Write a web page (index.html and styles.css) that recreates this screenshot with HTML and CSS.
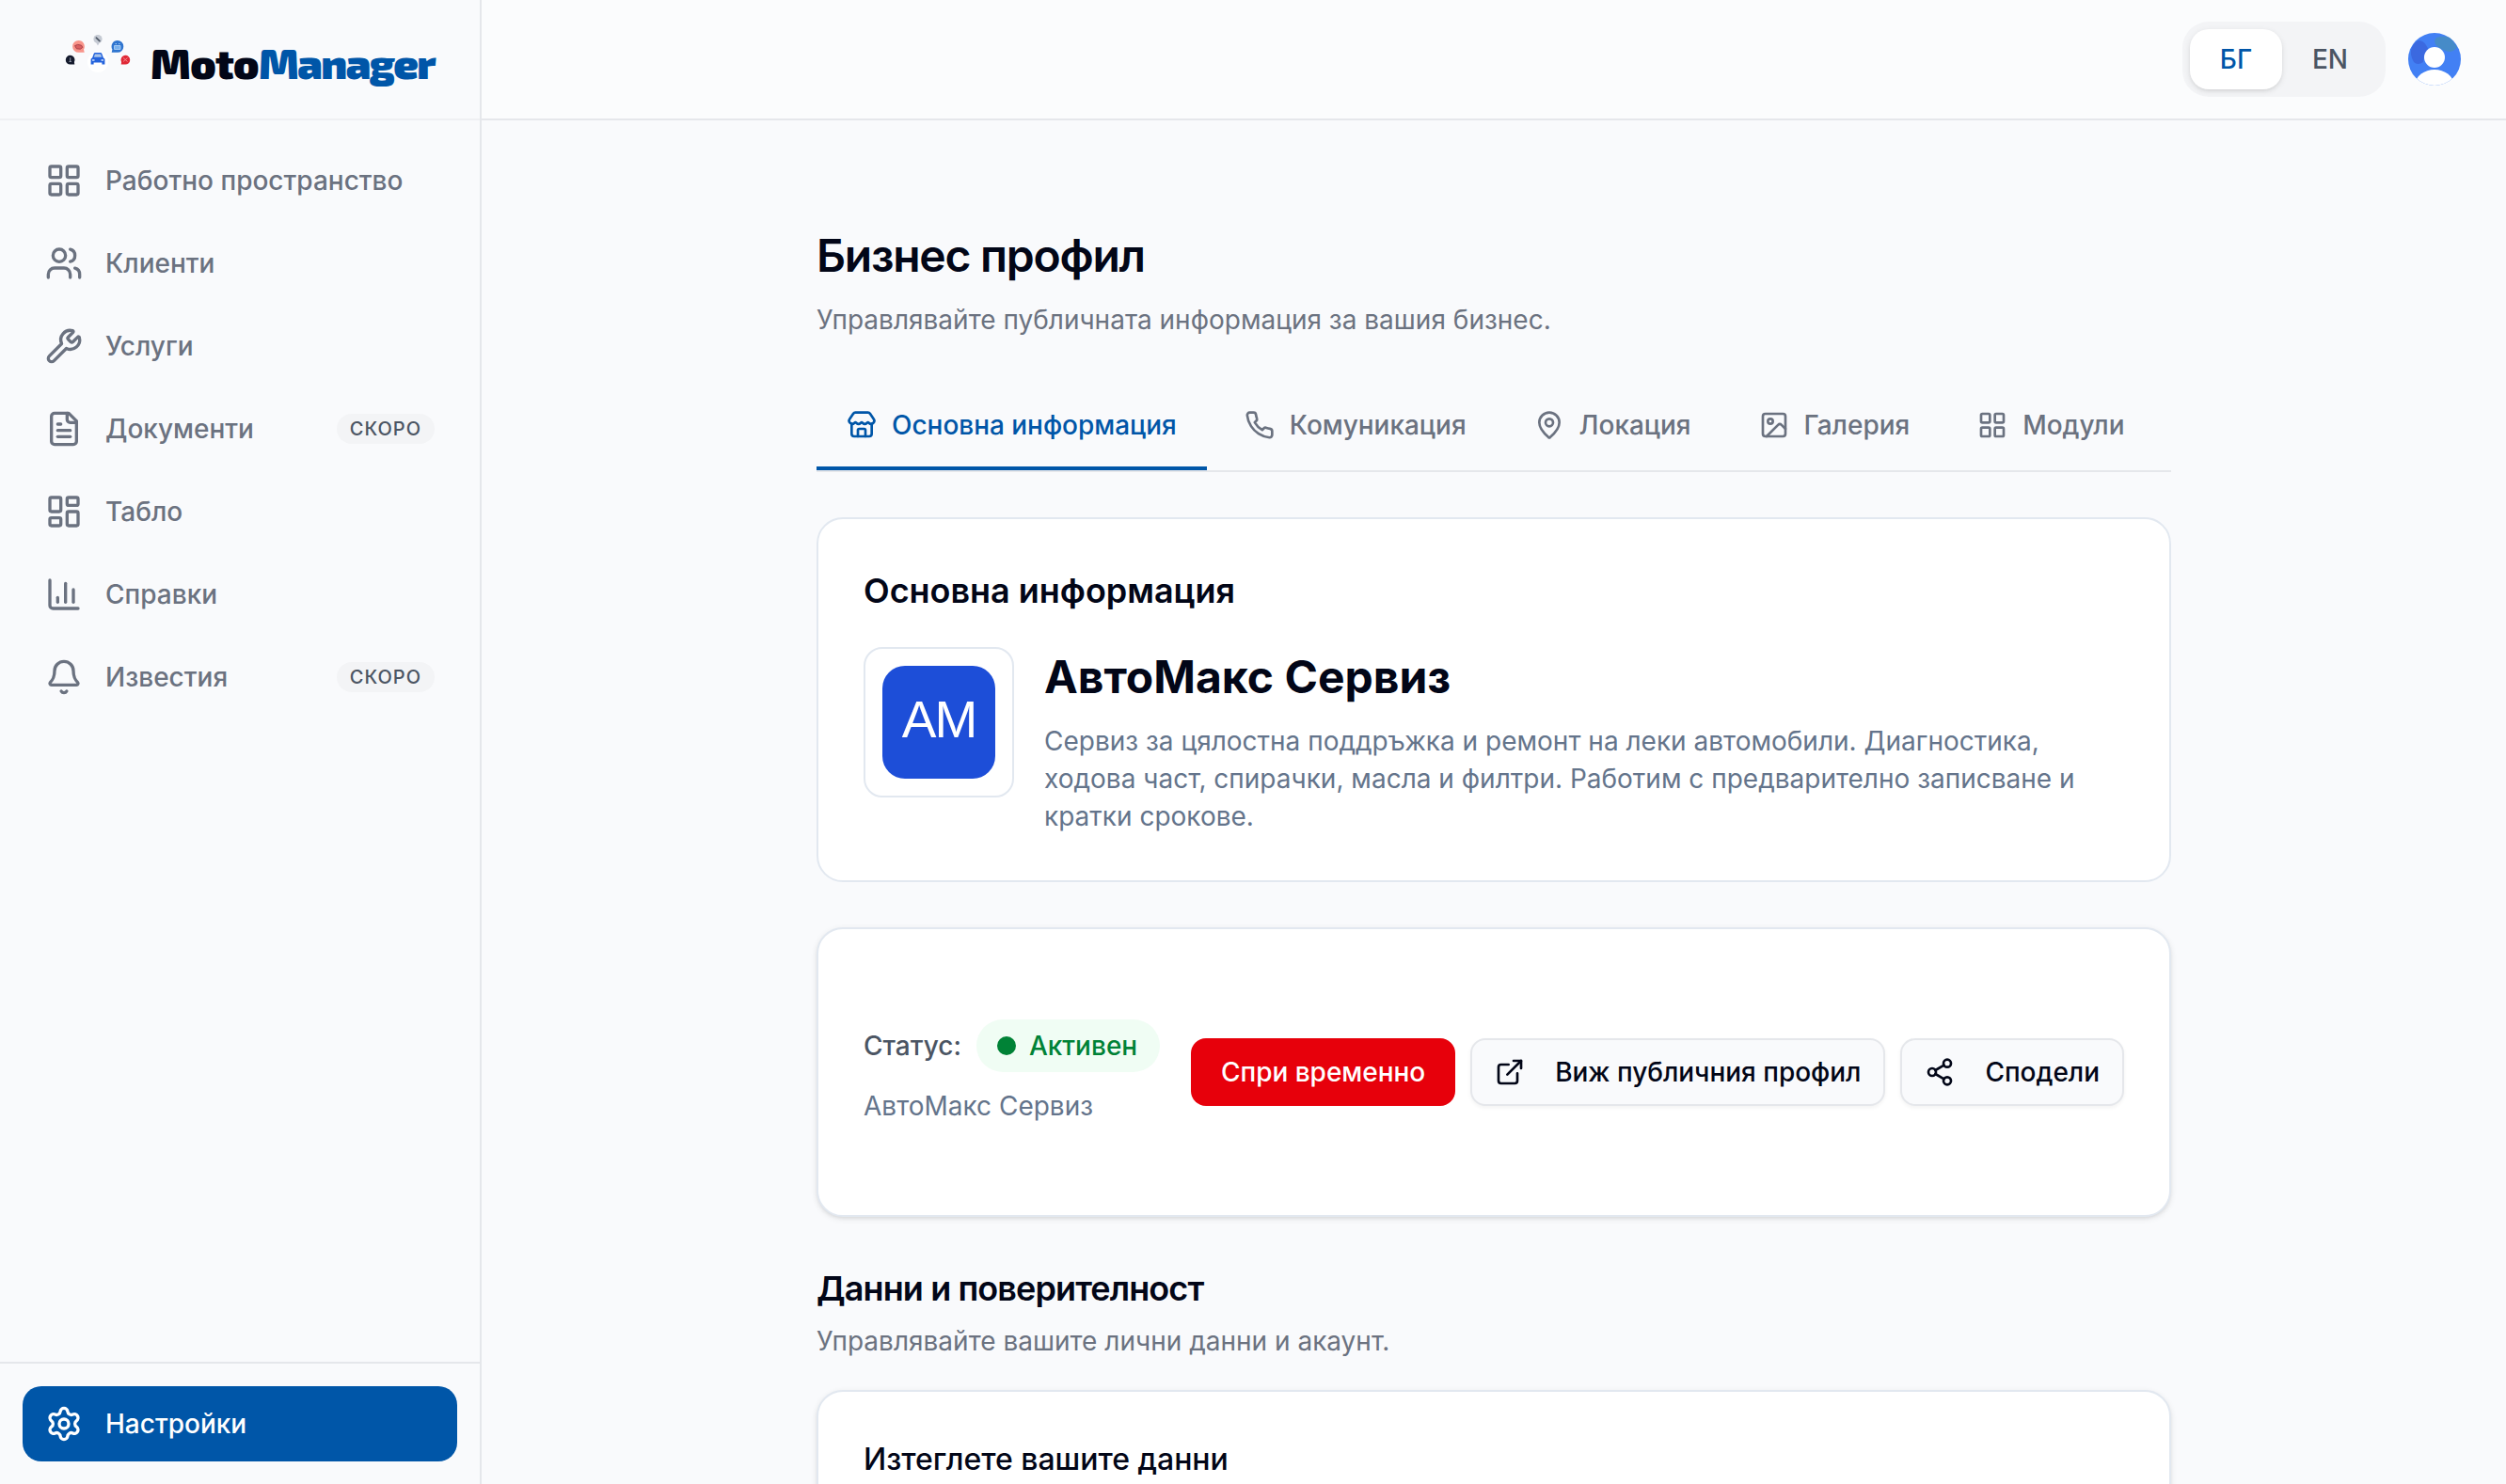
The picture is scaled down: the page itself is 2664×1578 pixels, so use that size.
FILE: index.html
```html
<!DOCTYPE html>
<html lang="bg">
<head>
<meta charset="utf-8">
<title>MotoManager</title>
<link rel="stylesheet" href="styles.css">
</head>
<body>
<svg class="sprite" aria-hidden="true">
  <symbol id="grid" viewBox="0 0 24 24"><rect width="7" height="7" x="3" y="3" rx="1"/><rect width="7" height="7" x="14" y="3" rx="1"/><rect width="7" height="7" x="14" y="14" rx="1"/><rect width="7" height="7" x="3" y="14" rx="1"/></symbol>
  <symbol id="users" viewBox="0 0 24 24"><path d="M16 21v-2a4 4 0 0 0-4-4H6a4 4 0 0 0-4 4v2"/><path d="M16 3.128a4 4 0 0 1 0 7.744"/><path d="M22 21v-2a4 4 0 0 0-3-3.87"/><circle cx="9" cy="7" r="4"/></symbol>
  <symbol id="wrench" viewBox="0 0 24 24"><path d="M14.7 6.3a1 1 0 0 0 0 1.4l1.6 1.6a1 1 0 0 0 1.4 0l3.106-3.105c.32-.322.863-.22.983.218a6 6 0 0 1-8.259 7.057l-7.91 7.91a1 1 0 0 1-2.999-3l7.91-7.91a6 6 0 0 1 7.057-8.259c.438.12.54.662.219.984z"/></symbol>
  <symbol id="file" viewBox="0 0 24 24"><path d="M15 2H6a2 2 0 0 0-2 2v16a2 2 0 0 0 2 2h12a2 2 0 0 0 2-2V7Z"/><path d="M14 2v4a2 2 0 0 0 2 2h4"/><path d="M10 9H8"/><path d="M16 13H8"/><path d="M16 17H8"/></symbol>
  <symbol id="dashboard" viewBox="0 0 24 24"><rect width="7" height="9" x="3" y="3" rx="1"/><rect width="7" height="5" x="14" y="3" rx="1"/><rect width="7" height="9" x="14" y="12" rx="1"/><rect width="7" height="5" x="3" y="16" rx="1"/></symbol>
  <symbol id="chart" viewBox="0 0 24 24"><path d="M3 3v16a2 2 0 0 0 2 2h16"/><path d="M18 17V9"/><path d="M13 17V5"/><path d="M8 17v-3"/></symbol>
  <symbol id="bell" viewBox="0 0 24 24"><path d="M10.268 21a2 2 0 0 0 3.464 0"/><path d="M3.262 15.326A1 1 0 0 0 4 17h16a1 1 0 0 0 .74-1.673C19.41 13.956 18 12.499 18 8A6 6 0 0 0 6 8c0 4.499-1.411 5.956-2.738 7.326"/></symbol>
  <symbol id="settings" viewBox="0 0 24 24"><path d="M9.671 4.136a2.34 2.34 0 0 1 4.659 0 2.34 2.34 0 0 0 3.319 1.915 2.34 2.34 0 0 1 2.33 4.033 2.34 2.34 0 0 0 0 3.831 2.34 2.34 0 0 1-2.33 4.033 2.34 2.34 0 0 0-3.319 1.915 2.34 2.34 0 0 1-4.659 0 2.34 2.34 0 0 0-3.32-1.915 2.34 2.34 0 0 1-2.33-4.033 2.34 2.34 0 0 0 0-3.831A2.34 2.34 0 0 1 6.35 6.051a2.34 2.34 0 0 0 3.319-1.915"/><circle cx="12" cy="12" r="3"/></symbol>
  <symbol id="store" viewBox="0 0 24 24"><path d="M15 21v-5a1 1 0 0 0-1-1h-4a1 1 0 0 0-1 1v5"/><path d="M17.774 10.31a1.12 1.12 0 0 0-1.549 0 2.5 2.5 0 0 1-3.451 0 1.12 1.12 0 0 0-1.548 0 2.5 2.5 0 0 1-3.452 0 1.12 1.12 0 0 0-1.549 0 2.5 2.5 0 0 1-3.77-3.248l2.889-4.184A2 2 0 0 1 7 2h10a2 2 0 0 1 1.653.873l2.895 4.192a2.5 2.5 0 0 1-3.774 3.244"/><path d="M4 10.95V19a2 2 0 0 0 2 2h12a2 2 0 0 0 2-2v-8.05"/></symbol>
  <symbol id="phone" viewBox="0 0 24 24"><path d="M22 16.92v3a2 2 0 0 1-2.18 2 19.79 19.79 0 0 1-8.63-3.07 19.5 19.5 0 0 1-6-6 19.79 19.79 0 0 1-3.07-8.67A2 2 0 0 1 4.11 2h3a2 2 0 0 1 2 1.72 12.84 12.84 0 0 0 .7 2.81 2 2 0 0 1-.45 2.11L8.09 9.91a16 16 0 0 0 6 6l1.27-1.27a2 2 0 0 1 2.11-.45 12.84 12.84 0 0 0 2.81.7A2 2 0 0 1 22 16.92z"/></symbol>
  <symbol id="pin" viewBox="0 0 24 24"><path d="M20 10c0 4.993-5.539 10.193-7.399 11.799a1 1 0 0 1-1.202 0C9.539 20.193 4 14.993 4 10a8 8 0 0 1 16 0"/><circle cx="12" cy="10" r="3"/></symbol>
  <symbol id="image" viewBox="0 0 24 24"><rect width="18" height="18" x="3" y="3" rx="2"/><circle cx="9" cy="9" r="2"/><path d="m21 15-3.086-3.086a2 2 0 0 0-2.828 0L6 21"/></symbol>
  <symbol id="external" viewBox="0 0 24 24"><path d="M15 3h6v6"/><path d="M10 14 21 3"/><path d="M18 13v6a2 2 0 0 1-2 2H5a2 2 0 0 1-2-2V8a2 2 0 0 1 2-2h6"/></symbol>
  <symbol id="share" viewBox="0 0 24 24"><circle cx="18" cy="5" r="3"/><circle cx="6" cy="12" r="3"/><circle cx="18" cy="19" r="3"/><path d="m8.59 13.51 6.83 3.98"/><path d="m15.41 6.51-6.82 3.98"/></symbol>
</svg>

<div class="app">
  <aside class="sidebar">
    <a class="brand" href="#">
      <svg class="brand-mark" viewBox="64 24 80 80">
        <circle cx="104" cy="67" r="11" fill="#fff"/>
        <circle cx="104" cy="42.6" r="4.6" fill="#c5cad3"/>
        <path d="M102.3 46.5h3.4L104 49.5z" fill="#c5cad3"/>
        <path d="M102.3 41.2l3.6 3.4" stroke="#4b5563" stroke-width="1.6" stroke-linecap="round"/>
        <path d="M83.5 44a6.4 6.4 0 1 0 0 12.8h6.2l-.7-3.2A6.4 6.4 0 0 0 83.5 44z" fill="#f8948a"/>
        <path d="M79.6 49.6l3-1.2 4 .8 1.2 2.2-2.4 1.8-4-.4z" fill="#d95f60" stroke="#a43c47" stroke-width=".9"/>
        <path d="M124.9 44a6.4 6.4 0 1 1 0 12.8h-6.2l.7-3.2a6.4 6.4 0 0 1 5.5-9.6z" fill="#2e74cf"/>
        <path d="M121.5 49.5h6.5v4h-6.5zM122.5 47.6h1.5M126 47.6h1.5" fill="#79b1ee" stroke="#a9cff6" stroke-width=".9"/>
        <path d="M74.7 59.8a4.9 4.9 0 1 0 0 9.8h4.600l-.4-2.6a4.900 4.900 0 0 0-4.200-7.200z" fill="#141a2d"/>
        <path d="M74.7 62.3v3.6M73.5 66.5h2.4" stroke="#8d94a5" stroke-width="1.1"/>
        <path d="M133.300 59.800a4.900 4.900 0 1 1 0 9.800h-4.600l.4-2.600a4.900 4.900 0 0 1 4.200-7.200z" fill="#e02936"/>
        <path d="M131 62.5l4.5 4M135.5 62.5l-4.5 4" stroke="#f58d92" stroke-width=".9"/>
        <path d="M98.200 62.200l1.500-4.200q.4-1 1.500-1h5.600q1.100 0 1.500 1l1.500 4.200 1.600 1.500v5.700h-3v-1.800h-8.800v1.800h-3v-5.700z" fill="#2463dd"/>
        <path d="M99.800 61.700l1.200-3.200h6l1.200 3.200z" fill="#a8c4ea"/>
        <path d="M98 65h2.500M107.500 65h2.500" stroke="#cfe1fb" stroke-width="1.300"/>
      </svg>
      <span class="brand-name">Moto<span class="brand-accent">Manager</span></span>
    </a>
    <nav class="nav">
      <a class="nav-item" href="#"><svg class="icon"><use href="#grid"/></svg><span>Работно пространство</span></a>
      <a class="nav-item" href="#"><svg class="icon"><use href="#users"/></svg><span>Клиенти</span></a>
      <a class="nav-item" href="#"><svg class="icon"><use href="#wrench"/></svg><span>Услуги</span></a>
      <a class="nav-item" href="#"><svg class="icon"><use href="#file"/></svg><span>Документи</span><span class="soon">СКОРО</span></a>
      <a class="nav-item" href="#"><svg class="icon"><use href="#dashboard"/></svg><span>Табло</span></a>
      <a class="nav-item" href="#"><svg class="icon"><use href="#chart"/></svg><span>Справки</span></a>
      <a class="nav-item" href="#"><svg class="icon"><use href="#bell"/></svg><span>Известия</span><span class="soon">СКОРО</span></a>
    </nav>
    <div class="sidebar-footer">
      <a class="nav-item nav-item-active" href="#"><svg class="icon"><use href="#settings"/></svg><span>Настройки</span></a>
    </div>
  </aside>

  <div class="page">
    <header class="topbar">
      <div class="lang">
        <button class="lang-option lang-option-active">БГ</button>
        <button class="lang-option">EN</button>
      </div>
      <svg class="avatar" viewBox="0 0 56 56">
        <clipPath id="round"><circle cx="28" cy="28" r="28"/></clipPath>
        <g clip-path="url(#round)">
          <rect width="56" height="56" fill="#4280f4"/>
          <path d="M11 8q5 0 8 5l3 5-5 6-1 7q-6 4-10 0-5-8-2-16 3-6 7-7z" fill="#3b69e0"/>
          <path d="M30 5q8-3 15 0l7 10q-3 5-9 5l-6-2q-6-3-8-6-2-4 1-7z" fill="#468bc8"/>
          <circle cx="28" cy="26" r="11" fill="#fff"/>
          <ellipse cx="28" cy="54" rx="20" ry="15" fill="#fff"/>
        </g>
      </svg>
    </header>

    <main class="content">
      <div class="page-head">
        <h1 class="title">Бизнес профил</h1>
        <p class="subtitle">Управлявайте публичната информация за вашия бизнес.</p>
      </div>

      <div class="tabs">
        <button class="tab tab-active"><svg class="icon icon-sm"><use href="#store"/></svg>Основна информация</button>
        <button class="tab"><svg class="icon icon-sm"><use href="#phone"/></svg>Комуникация</button>
        <button class="tab"><svg class="icon icon-sm"><use href="#pin"/></svg>Локация</button>
        <button class="tab"><svg class="icon icon-sm"><use href="#image"/></svg>Галерия</button>
        <button class="tab"><svg class="icon icon-sm"><use href="#grid"/></svg>Модули</button>
      </div>

      <section class="card info-card">
        <h2 class="card-title">Основна информация</h2>
        <div class="business">
          <div class="business-logo"><div class="monogram">AM</div></div>
          <div class="business-text">
            <h3 class="business-name">АвтоМакс Сервиз</h3>
            <p class="business-desc">Сервиз за цялостна поддръжка и ремонт на леки автомобили. Диагностика, ходова част, спирачки, масла и филтри. Работим с предварително записване и кратки срокове.</p>
          </div>
        </div>
      </section>

      <section class="card raised status-card">
        <div class="status">
          <div class="status-row">
            <span class="status-label">Статус:</span>
            <span class="badge"><span class="dot"></span>Активен</span>
          </div>
          <p class="status-name">АвтоМакс Сервиз</p>
        </div>
        <div class="actions">
          <button class="btn btn-danger">Спри временно</button>
          <button class="btn btn-outline"><svg class="icon icon-sm"><use href="#external"/></svg>Виж публичния профил</button>
          <button class="btn btn-outline"><svg class="icon icon-sm"><use href="#share"/></svg>Сподели</button>
        </div>
      </section>

      <section class="privacy">
        <h2 class="section-title">Данни и поверителност</h2>
        <p class="section-sub">Управлявайте вашите лични данни и акаунт.</p>
        <div class="card raised">
          <h3 class="item-title">Изтеглете вашите данни</h3>
        </div>
      </section>
    </main>
  </div>
</div>
</body>
</html>
```
FILE: styles.css
```css
*, *::before, *::after { box-sizing: border-box; }

body {
  margin: 0;
  background: #f9fafc;
  color: #020617;
  font-family: Inter, "Noto Sans", sans-serif;
  font-size: 28px;
  line-height: 40px;
}

h1, h2, h3, p { margin: 0; }
a { color: inherit; text-decoration: none; }
button { font: inherit; color: inherit; border: 0; margin: 0; background: none; }

.sprite { display: none; }

.icon {
  width: 40px;
  height: 40px;
  flex: none;
  fill: none;
  stroke: currentColor;
  stroke-width: 2;
  stroke-linecap: round;
  stroke-linejoin: round;
}
.icon-sm { width: 32px; height: 32px; }

.app {
  display: flex;
  height: 1578px;
  overflow: hidden;
}

/* Sidebar */
.sidebar {
  width: 512px;
  flex: none;
  display: flex;
  flex-direction: column;
  border-right: 2px solid #e5e7eb;
}
.brand {
  height: 128px;
  flex: none;
  display: flex;
  align-items: center;
  gap: 16px;
  padding-left: 64px;
  border-bottom: 2px solid #eff0f3;
}
.brand-mark { width: 80px; height: 80px; flex: none; fill: none; }
.brand-name {
  font-family: "Exo 2", Inter, sans-serif;
  font-size: 45px;
  font-weight: 900;
  line-height: 56px;
  letter-spacing: -.6px;
  white-space: nowrap;
  padding-top: 5px;
}
.brand-accent { color: #0056a8; letter-spacing: -1.5px; }

.nav {
  flex: 1;
  display: flex;
  flex-direction: column;
  gap: 8px;
  padding: 24px;
}
.nav-item {
  height: 80px;
  display: flex;
  align-items: center;
  gap: 24px;
  padding: 0 24px;
  border-radius: 20px;
  color: #6b7280;
  font-weight: 500;
  white-space: nowrap;
}
.nav-item-active { background: #0056a8; color: #fff; }
.soon {
  margin-left: auto;
  height: 32px;
  padding: 0 14px;
  border-radius: 16px;
  background: #f3f4f6;
  color: #4b5563;
  font-size: 20px;
  line-height: 32px;
  letter-spacing: 1px;
}
.sidebar-footer {
  padding: 24px;
  border-top: 2px solid #e5e7eb;
}

/* Top bar */
.page { flex: 1; min-width: 0; }
.topbar {
  height: 128px;
  display: flex;
  align-items: center;
  justify-content: flex-end;
  gap: 24px;
  padding-right: 48px;
  background: #fbfcfd;
  border-bottom: 2px solid #e5e7eb;
}
.lang {
  height: 80px;
  display: flex;
  padding: 8px;
  border-radius: 28px;
  background: #f3f4f6;
}
.lang-option {
  width: 102px;
  height: 64px;
  padding: 0;
  border-radius: 20px;
  color: #4b5563;
  font-weight: 500;
}
.lang-option-active {
  width: 98px;
  background: #fff;
  color: #0056a8;
  box-shadow: 0 2px 6px rgba(0, 0, 0, .1), 0 2px 4px -2px rgba(0, 0, 0, .1);
}
.avatar { width: 56px; height: 56px; }

/* Content */
.content {
  width: 1440px;
  margin: 0 auto;
  padding-top: 112px;
  display: flex;
  flex-direction: column;
  gap: 48px;
}
.page-head { display: flex; flex-direction: column; gap: 16px; }
.title {
  font-size: 48px;
  line-height: 64px;
  font-weight: 600;
  letter-spacing: -1.25px;
}
.subtitle, .section-sub { color: #6b7280; }

.tabs {
  display: flex;
  gap: 8px;
  border-bottom: 2px solid #e5e7eb;
}
.tab {
  display: flex;
  align-items: center;
  gap: 16px;
  height: 92px;
  padding: 0 32px;
  border-bottom: 4px solid transparent;
  color: #6b7280;
  font-weight: 500;
  letter-spacing: -.03px;
  white-space: nowrap;
}
.tab-active { color: #0056a8; border-bottom-color: #0056a8; }

.card {
  padding: 48px;
  border: 2px solid #e2e8f0;
  border-radius: 28px;
  background: #fff;
}
.raised { box-shadow: 0 2px 6px rgba(0, 0, 0, .1), 0 2px 4px -2px rgba(0, 0, 0, .1); }

.info-card { display: flex; flex-direction: column; gap: 32px; }
.card-title { font-size: 36px; line-height: 56px; font-weight: 600; letter-spacing: -.03px; }
.business { display: flex; align-items: flex-start; gap: 32px; }
.business-logo {
  width: 160px;
  height: 160px;
  flex: none;
  padding: 18px;
  border: 2px solid #e2e8f0;
  border-radius: 20px;
}
.monogram {
  height: 120px;
  border-radius: 24px;
  background: #1d4ed8;
  color: #fff;
  font-family: "Liberation Sans", sans-serif;
  font-size: 55px;
  line-height: 115px;
  letter-spacing: -2px;
  text-align: center;
}
.business-text { flex: 1; display: flex; flex-direction: column; gap: 16px; }
.business-name { font-size: 48px; line-height: 64px; font-weight: 700; }
.business-desc { color: #64748b; }

.status-card {
  height: 308px;
  display: flex;
  align-items: center;
  justify-content: space-between;
}
.status { display: flex; flex-direction: column; gap: 16px; }
.status-row { display: flex; align-items: center; gap: 16px; }
.status-label { color: #4b5563; font-weight: 500; }
.badge {
  height: 56px;
  display: flex;
  align-items: center;
  gap: 14px;
  padding: 0 24px 0 22px;
  border-radius: 28px;
  background: #f0fdf4;
  color: #008236;
  font-weight: 500;
}
.dot {
  width: 20px;
  height: 20px;
  border-radius: 50%;
  background: #008236;
}
.status-name { color: #64748b; }
.actions { display: flex; gap: 16px; }
.btn {
  height: 72px;
  display: flex;
  align-items: center;
  gap: 32px;
  border-radius: 16px;
  font-weight: 500;
  letter-spacing: -.03px;
  white-space: nowrap;
}
.btn-danger { padding: 0 32px; background: #e7000b; color: #fff; }
.btn-outline {
  padding: 0 24px;
  border: 2px solid #e5e7eb;
  background: #f9fafc;
  box-shadow: 0 2px 4px rgba(0, 0, 0, .05);
}

.section-title {
  font-size: 36px;
  line-height: 56px;
  font-weight: 600;
  letter-spacing: -.9px;
}
.section-sub { margin: 8px 0 32px; }
.item-title { font-size: 32px; line-height: 48px; font-weight: 500; letter-spacing: -.03px; }
```
